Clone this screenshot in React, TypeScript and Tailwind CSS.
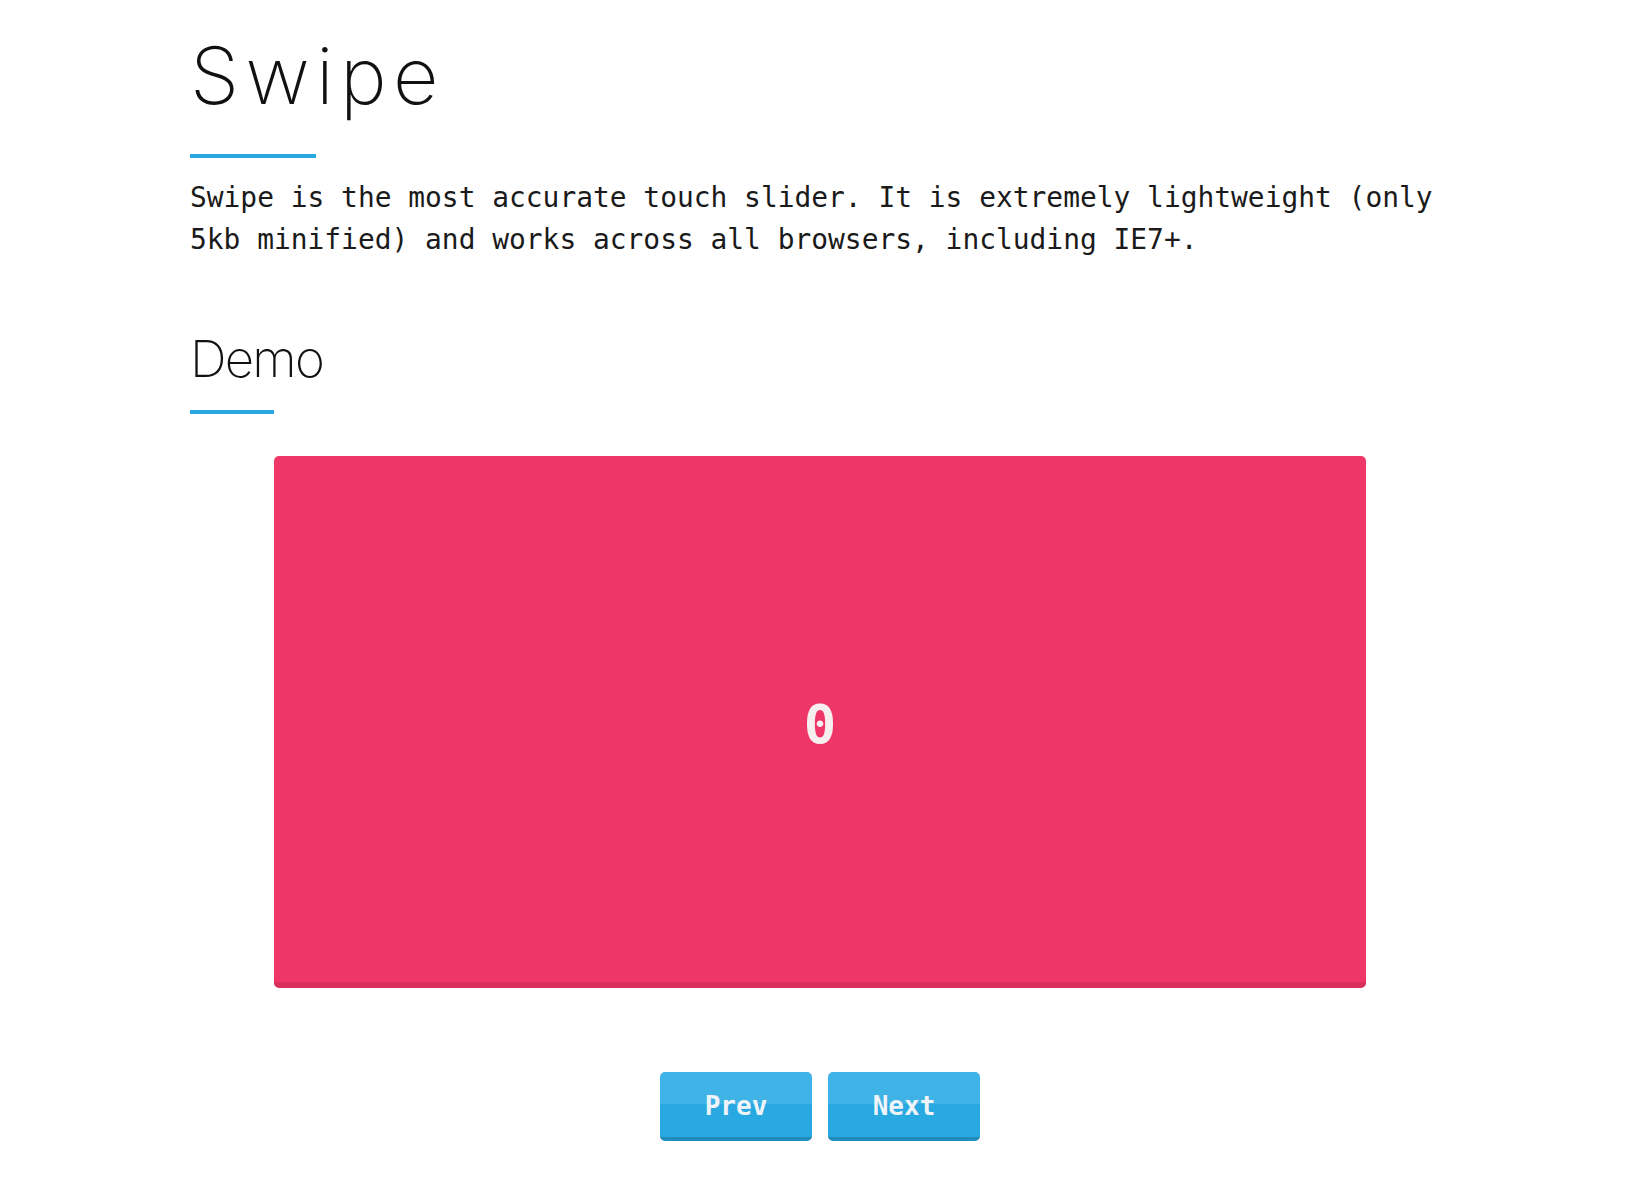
export default function App() {
  return (
    <div className="min-h-screen bg-white pl-[190px] pt-[36px] pb-[53px]">
      <div className="w-[1260px]">
        {/* Title */}
        <h1 className="text-[79px] leading-none font-extralight tracking-[0.08em] text-[#111] font-['Inter',sans-serif]">
          Swipe
        </h1>
        <div className="mt-[39px] h-1 w-[126px] bg-[#29a9e1]" />

        <p className="mt-[19px] text-[27.9px] leading-[42px] text-[#1a1a1a] font-['DejaVu_Sans_Mono',monospace]">
          Swipe is the most accurate touch slider. It is extremely lightweight (only 5kb minified) and works
          across all browsers, including IE7+.
        </p>

        {/* Demo */}
        <h2 className="mt-[72px] text-[51px] leading-none font-extralight tracking-[-0.035em] text-[#111] font-['Inter',sans-serif]">
          Demo
        </h2>
        <div className="mt-[26px] h-1 w-[84px] bg-[#29a9e1]" />

        <div className="mx-[84px] mt-[42px] flex h-[532px] items-center justify-center rounded-[5px] border-b-[6px] border-[#d8315d] bg-[#ee3767] pt-[10px]">
          <span className="text-[54px] font-bold text-[#f7eef0] font-['DejaVu_Sans_Mono',monospace]">0</span>
        </div>

        {/* Controls */}
        <div className="mt-[84px] flex justify-center gap-4">
          <button className="h-[69px] w-[152px] rounded-[5px] border-b-4 border-[#1f8cc0] bg-[linear-gradient(to_bottom,#3fb2e6_50%,#29a9e1_50%)] pt-1 text-[26px] font-bold text-[#eef4f7] font-['DejaVu_Sans_Mono',monospace]">
            Prev
          </button>
          <button className="h-[69px] w-[152px] rounded-[5px] border-b-4 border-[#1f8cc0] bg-[linear-gradient(to_bottom,#3fb2e6_50%,#29a9e1_50%)] pt-1 text-[26px] font-bold text-[#eef4f7] font-['DejaVu_Sans_Mono',monospace]">
            Next
          </button>
        </div>
      </div>
    </div>
  )
}
